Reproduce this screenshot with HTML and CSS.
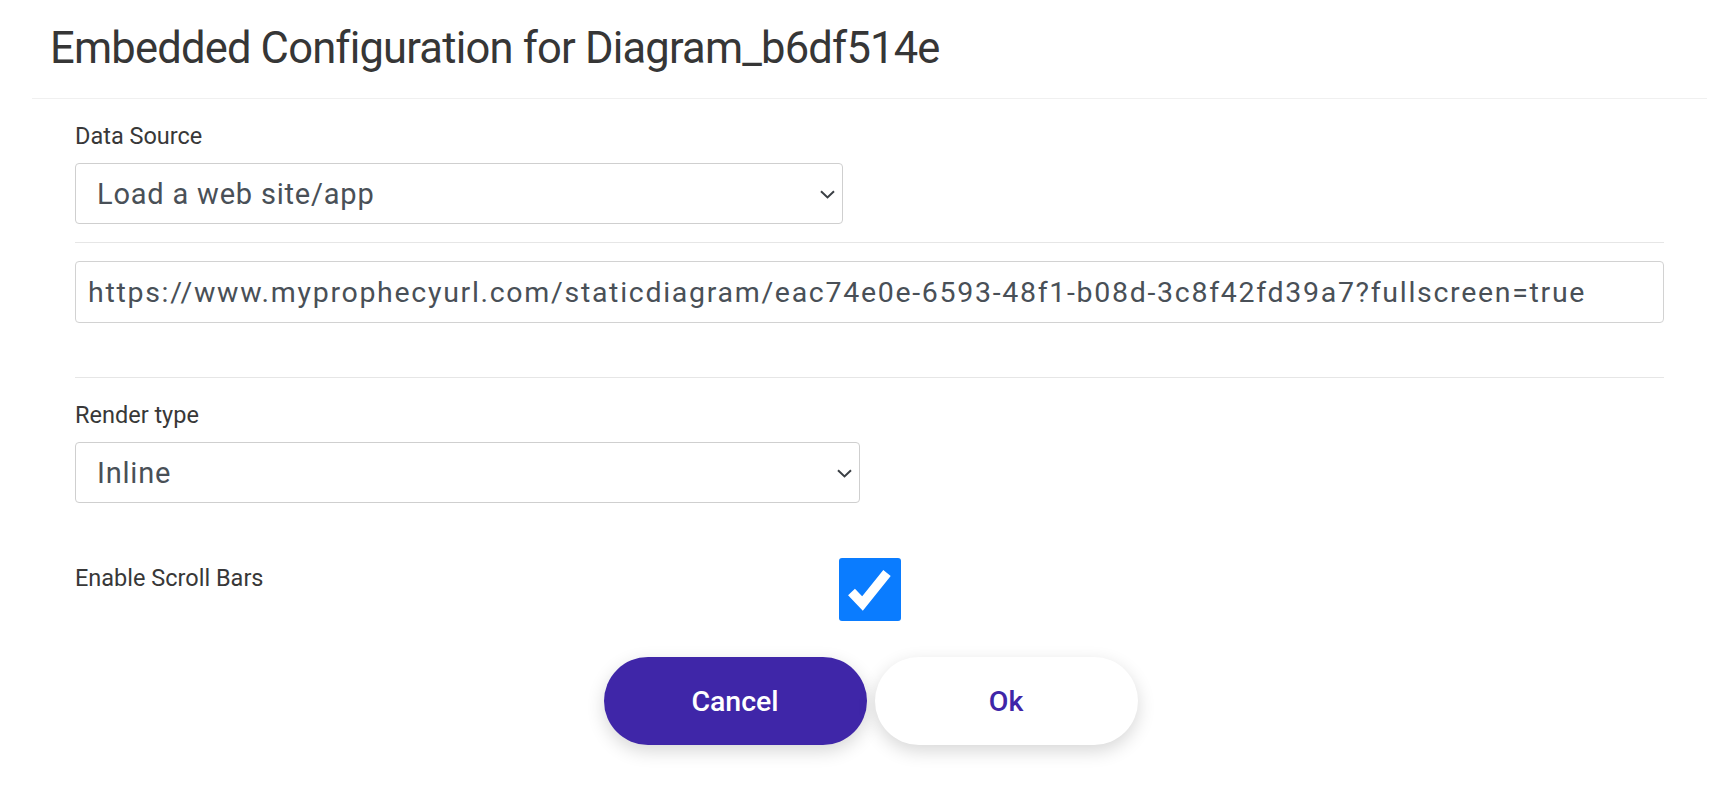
FILE: index.html
```html
<!DOCTYPE html>
<html lang="en">
<head>
<meta charset="utf-8">
<title>Embedded Configuration</title>
<link rel="stylesheet" href="styles.css">
</head>
<body>
<div class="modal">
  <div class="modal-header">
    <h1 class="modal-title">Embedded Configuration for Diagram_b6df514e</h1>
  </div>
  <div class="modal-body">
    <div class="group">
      <label class="field-label">Data Source</label>
      <div class="select select-source">
        <span class="select-value">Load a web site/app</span>
        <svg class="chevron" width="15" height="9" viewBox="0 0 15 9"><polyline points="1,1.2 7.5,7.4 14,1.2" fill="none" stroke="#3a3f44" stroke-width="2"/></svg>
      </div>
    </div>
    <hr class="divider">
    <input class="url-input" type="text" value="https://www.myprophecyurl.com/staticdiagram/eac74e0e-6593-48f1-b08d-3c8f42fd39a7?fullscreen=true">
    <hr class="divider divider-lower">
    <div class="group">
      <label class="field-label">Render type</label>
      <div class="select select-render">
        <span class="select-value">Inline</span>
        <svg class="chevron" width="15" height="9" viewBox="0 0 15 9"><polyline points="1,1.2 7.5,7.4 14,1.2" fill="none" stroke="#3a3f44" stroke-width="2"/></svg>
      </div>
    </div>
    <div class="check-row">
      <span class="check-label">Enable Scroll Bars</span>
      <span class="checkbox">
        <svg width="62" height="63" viewBox="0 0 62 63"><polyline points="12.5,34 23.5,45.5 48,15" fill="none" stroke="#ffffff" stroke-width="9.5" stroke-linejoin="miter"/></svg>
      </span>
    </div>
  </div>
  <div class="modal-footer">
    <button class="btn btn-cancel" type="button">Cancel</button>
    <button class="btn btn-ok" type="button">Ok</button>
  </div>
</div>
</body>
</html>
```

FILE: styles.css
```css
html, body {
  margin: 0;
  padding: 0;
  background: #ffffff;
}

body {
  font-family: Roboto, "Liberation Sans", sans-serif;
  color: #333333;
  width: 1734px;
  height: 794px;
  overflow: hidden;
}

.modal-header {
  margin: 0 27px 0 32px;
  padding: 23px 0 23px 18px;
  border-bottom: 1px solid #f0f0f0;
}

.modal-title {
  margin: 0;
  font-size: 43.5px;
  line-height: 52px;
  font-weight: 400;
  color: #363636;
  letter-spacing: -0.8px;
}

.modal-body {
  padding: 0 70px 0 75px;
}

.group {
  padding-top: 23px;
}

.field-label {
  display: block;
  font-size: 23.5px;
  line-height: 28px;
  color: #383838;
  margin-bottom: 13px;
}

.select {
  box-sizing: border-box;
  height: 61px;
  border: 1px solid #cfcfcf;
  border-radius: 4px;
  display: flex;
  align-items: center;
  justify-content: space-between;
  padding: 0 7px 0 21px;
  background: #fff;
}

.select-source {
  width: 768px;
}

.select-render {
  width: 785px;
}

.select-value {
  font-size: 29px;
  color: #495057;
  letter-spacing: 0.8px;
}

.chevron {
  display: block;
  margin-top: 2px;
}

.divider {
  border: 0;
  border-top: 1px solid #e6e6e6;
  margin: 18px 0;
  height: 0;
}

.divider-lower {
  margin-top: 54px;
  margin-bottom: 0;
}

.url-input {
  display: block;
  box-sizing: border-box;
  width: 100%;
  height: 62px;
  margin: 0;
  border: 1px solid #d2d2d2;
  border-radius: 4px;
  padding: 0 12px;
  font-family: Roboto, "Liberation Sans", sans-serif;
  font-size: 28.5px;
  letter-spacing: 1.7px;
  color: #495057;
  background: #fff;
  outline: none;
}

.check-row {
  display: grid;
  grid-template-columns: 764px 62px;
  align-items: start;
  margin-top: 55px;
}

.check-label {
  font-size: 23.5px;
  line-height: 28px;
  color: #383838;
  margin-top: 6px;
}

.checkbox {
  display: block;
  width: 62px;
  height: 63px;
  background: #0a7cff;
  border-radius: 3px;
}

.checkbox svg {
  display: block;
}

.modal-footer {
  display: flex;
  justify-content: center;
  gap: 8px;
  margin-top: 36px;
  padding-left: 7px;
}

.btn {
  box-sizing: border-box;
  width: 263px;
  height: 88px;
  border: 0;
  border-radius: 44px;
  font-family: Roboto, "Liberation Sans", sans-serif;
  font-size: 28.5px;
  font-weight: 500;
  box-shadow: 0 6px 18px rgba(0, 0, 0, 0.16);
  cursor: pointer;
}

.btn-cancel {
  background: #3f26a8;
  color: #ffffff;
}

.btn-ok {
  background: #ffffff;
  color: #3f26a8;
}
```
